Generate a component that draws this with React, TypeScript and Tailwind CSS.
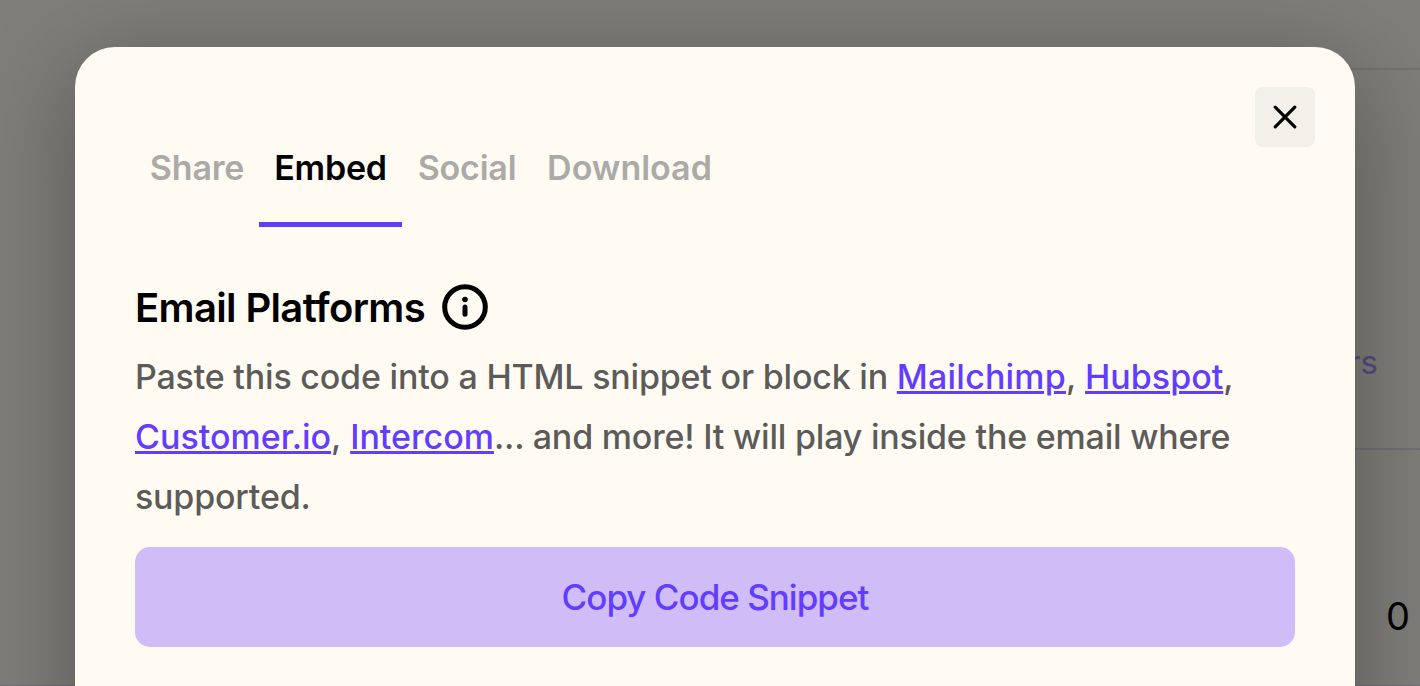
import { useState } from 'react'

const tabs = [
  { name: 'Share', width: 'w-[124px]', tracking: 'tracking-[-0.2px]' },
  { name: 'Embed', width: 'w-[143px]', tracking: 'tracking-[-0.2px]' },
  { name: 'Social', width: 'w-[130px]', tracking: 'tracking-[-0.2px]' },
  { name: 'Download', width: 'w-[195px]', tracking: 'tracking-[0px]' },
]

function PlatformLink({ children, className = '' }: { children: string; className?: string }) {
  return (
    <a href="#" className={`text-[#623dff] underline decoration-[3px] underline-offset-[2px] ${className}`}>
      {children}
    </a>
  )
}

function InfoIcon() {
  return (
    <svg className="h-[46px] w-[46px]" viewBox="0 0 46 46" fill="none" stroke="currentColor" strokeWidth="5">
      <circle cx="23" cy="23" r="20.3" />
      <circle cx="23" cy="15.5" r="2.8" fill="currentColor" stroke="none" />
      <path d="M23 23v7.3" strokeLinecap="round" />
    </svg>
  )
}

// Page behind the dialog, already dimmed by the backdrop
function Dashboard() {
  return (
    <div className="flex h-full flex-col items-end bg-[#7f7e7a]">
      <div className="h-[70px] w-[700px] border-b-2 border-[#73726f]" />
      <div className="flex h-[380px] w-[700px] items-end justify-end border-b-2 border-[#717075] pr-[42px] pb-[61px]">
        <span className="text-[33px] leading-[50px] text-[#554b80]">Viewers</span>
      </div>
      <div className="flex h-[236px] w-full items-end justify-end border-b border-[#757180] pr-[10px] pb-[44px]">
        <span className="text-[38px] leading-[50px] text-black">0</span>
      </div>
    </div>
  )
}

export default function App() {
  const [activeTab, setActiveTab] = useState('Embed')

  return (
    <div className="relative h-[686px] w-[1420px] overflow-hidden font-['Inter','Liberation_Sans',sans-serif]">
      <Dashboard />
      <div className="absolute top-[47px] left-[75px] h-[900px] w-[1280px] rounded-[40px] bg-[#fffbf3] px-[60px] pt-[40px] shadow-[0_20px_100px_rgba(0,0,0,0.32)]">
        <div className="-mr-[20px] flex h-[60px] justify-end">
          <button className="flex h-[60px] w-[60px] items-center justify-center rounded-[8px] bg-[#f3f0ea]">
            <svg className="h-[24px] w-[24px]" viewBox="0 0 24 24" stroke="black" strokeWidth="3.2" strokeLinecap="round">
              <path d="M2.2 2.2l19.6 19.6M21.8 2.2l-19.6 19.6" />
            </svg>
          </button>
        </div>

        <div className="-mt-[40px] flex h-[120px]">
          {tabs.map((tab) => (
            <button
              key={tab.name}
              onClick={() => setActiveTab(tab.name)}
              className={`flex h-[120px] items-center justify-center border-b-[5px] pt-[5px] text-[34px] font-semibold whitespace-nowrap ${tab.width} ${tab.tracking} ${
                activeTab === tab.name ? 'border-[#623dff] text-black' : 'border-transparent text-[#abaaa7]'
              }`}
            >
              {tab.name}
            </button>
          ))}
        </div>

        <div className="mt-[50px] flex h-[60px] items-center gap-[17px]">
          <h2 className="w-[290px] pt-[2px] text-[40px] font-semibold tracking-[-0.64px] whitespace-nowrap">
            Email Platforms
          </h2>
          <InfoIcon />
        </div>

        <p className="mt-[10px] text-[34px] leading-[60px] font-medium whitespace-nowrap text-[#5c5b59]">
          <span className="tracking-[-0.2px]">Paste this code into a HTML snippet or block in </span>
          <PlatformLink className="tracking-[0.2px]">Mailchimp</PlatformLink>,{' '}
          <PlatformLink>Hubspot</PlatformLink>,
          <br />
          <PlatformLink>Customer.io</PlatformLink>, <PlatformLink>Intercom</PlatformLink>
          <span className="tracking-[-0.2px]">... and more! It will play inside the email where</span>
          <br />
          <span className="tracking-[-0.2px]">supported.</span>
        </p>

        <button className="mt-[20px] flex h-[100px] w-[1160px] items-center justify-center rounded-[15px] bg-[#d0bdf8] text-[35px] font-medium tracking-[-1px] text-[#623dff]">
          Copy Code Snippet
        </button>
      </div>
    </div>
  )
}
